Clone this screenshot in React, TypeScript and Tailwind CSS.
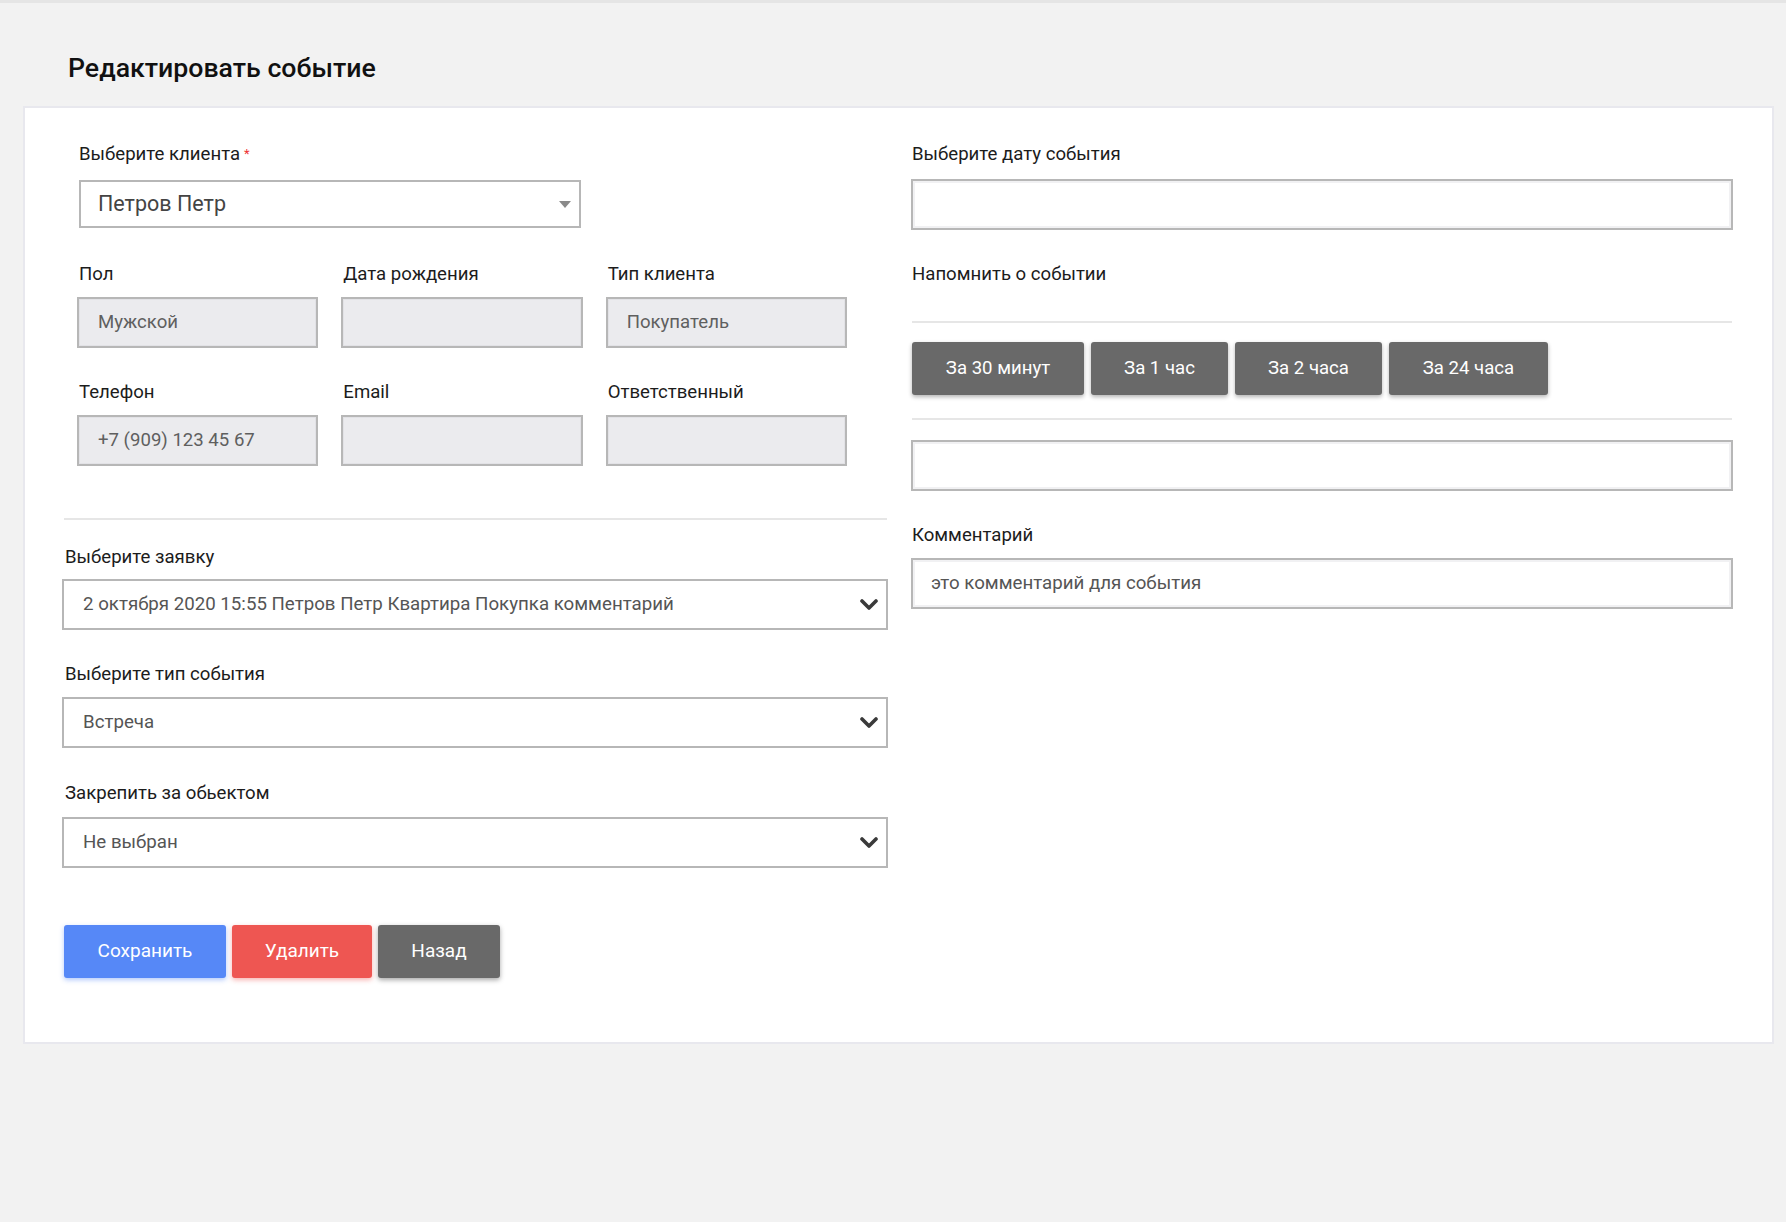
import React from "react";

const font = { fontFamily: "Roboto, 'Noto Sans', sans-serif" };

function Chevron() {
  return (
    <svg width="18" height="12" viewBox="0 0 18 12" className="shrink-0">
      <polyline points="2,2 9,9 16,2" fill="none" stroke="#3a3a3a" strokeWidth="3.6" strokeLinecap="round" strokeLinejoin="round" />
    </svg>
  );
}

function Caret() {
  return (
    <svg width="12" height="7" viewBox="0 0 12 7" className="shrink-0">
      <polygon points="0,0 12,0 6,7" fill="#8a8a8a" />
    </svg>
  );
}

function Label({ children, className = "" }: { children: React.ReactNode; className?: string }) {
  return <div className={"text-[18.6px] leading-[22px] text-[#1c1c1c] " + className}>{children}</div>;
}

function Disabled({ value }: { value?: string }) {
  return (
    <div className="h-[51px] border-2 border-[#b7b7b7] bg-[#ebebee] shadow-[inset_0_0_0_1px_#e2e2e6] flex items-center px-[19px] text-[18.6px] text-[#5f5f5f]">
      {value}
    </div>
  );
}

function Select({ value }: { value: string }) {
  return (
    <div className="-ml-[1px] h-[51px] border-2 border-[#b7b7b7] bg-white flex items-center justify-between pl-[19px] pr-[8px] text-[18.7px] text-[#555]">
      <span>{value}</span>
      <Chevron />
    </div>
  );
}

function TextInput({ value }: { value?: string }) {
  return (
    <div className="h-[51px] border-2 border-[#b7b7b7] bg-white shadow-[inset_0_0_0_2px_#f1f1f3] flex items-center px-[18px] text-[18.7px] text-[#555]">
      {value}
    </div>
  );
}

export default function App() {
  return (
    <div style={font} className="min-h-[1222px] w-full bg-[#f2f2f2] border-t-[3px] border-[#e5e5e5]">
      <h1 className="pl-[68px] pt-[49px] text-[26.7px] leading-[32px] font-medium text-[#111]">Редактировать событие</h1>
      <div className="ml-[23px] mt-[22px] w-[1751px] border-2 border-[#e8e8ee] bg-white pl-[38px] pt-[35px] pb-[64px]">
        <div className="flex gap-[23px]">
          {/* left column */}
          <div className="w-[825px] flex flex-col">
            <div className="pl-[14px] pr-[40px]">
              <Label className="pl-[2px]">
                Выберите клиента<sup className="text-[#e33] text-[13px] ml-[4px] relative -top-[2px]">*</sup>
              </Label>
              <div className="mt-[15px] ml-[2px] w-[502px] h-[48px] border-2 border-[#b7b7b7] bg-white flex items-center justify-between pl-[17px] pr-[8px] text-[21.5px] text-[#444]">
                <span>Петров Петр</span>
                <Caret />
              </div>
              <div className="grid grid-cols-3 gap-x-[23px] mt-[35px] w-[770px]">
                <div>
                  <Label className="pl-[2px]">Пол</Label>
                  <div className="mt-[12px]"><Disabled value="Мужской" /></div>
                </div>
                <div>
                  <Label className="pl-[2px]">Дата рождения</Label>
                  <div className="mt-[12px]"><Disabled /></div>
                </div>
                <div>
                  <Label className="pl-[2px]">Тип клиента</Label>
                  <div className="mt-[12px]"><Disabled value="Покупатель" /></div>
                </div>
              </div>
              <div className="grid grid-cols-3 gap-x-[23px] mt-[33px] w-[770px]">
                <div>
                  <Label className="pl-[2px]">Телефон</Label>
                  <div className="mt-[12px]"><Disabled value="+7 (909) 123 45 67" /></div>
                </div>
                <div>
                  <Label className="pl-[2px]">Email</Label>
                  <div className="mt-[12px]"><Disabled /></div>
                </div>
                <div>
                  <Label className="pl-[2px]">Ответственный</Label>
                  <div className="mt-[12px]"><Disabled /></div>
                </div>
              </div>
            </div>
            <div className="mt-[52px] h-[2px] bg-[#e6e6e6] ml-[1px] mr-[1px]" />
            <Label className="mt-[26px] pl-[2px]">Выберите заявку</Label>
            <div className="mt-[11px]"><Select value="2 октября 2020 15:55 Петров Петр Квартира Покупка комментарий" /></div>
            <Label className="mt-[33px] pl-[2px]">Выберите тип события</Label>
            <div className="mt-[12px]"><Select value="Встреча" /></div>
            <Label className="mt-[34px] pl-[2px]">Закрепить за обьектом</Label>
            <div className="mt-[13px]"><Select value="Не выбран" /></div>
            <div className="mt-[57px] flex gap-[6px] ml-[1px]">
              <button className="h-[53px] w-[162px] rounded-[3px] bg-[#5688f7] text-white text-[19px] shadow-[0_2px_5px_rgba(86,136,247,0.45)]">Сохранить</button>
              <button className="h-[53px] w-[140px] rounded-[3px] bg-[#ee5652] text-white text-[19px] shadow-[0_2px_5px_rgba(238,86,82,0.45)]">Удалить</button>
              <button className="h-[53px] w-[122px] rounded-[3px] bg-[#696969] text-white text-[19px] shadow-[0_2px_5px_rgba(0,0,0,0.35)]">Назад</button>
            </div>
          </div>
          {/* right column */}
          <div className="w-[822px] flex flex-col">
            <Label className="pl-[1px]">Выберите дату события</Label>
            <div className="mt-[14px]"><TextInput /></div>
            <Label className="mt-[33px] pl-[1px]">Напомнить о событии</Label>
            <div className="mt-[36px] h-[2px] bg-[#e6e6e6] ml-[1px] mr-[1px]" />
            <div className="mt-[19px] flex gap-[7px] ml-[1px]">
              {[
                ["За 30 минут", "w-[172px]"],
                ["За 1 час", "w-[137px]"],
                ["За 2 часа", "w-[147px]"],
                ["За 24 часа", "w-[159px]"],
              ].map(([t, w]) => (
                <button key={t} className={"h-[53px] rounded-[3px] bg-[#696969] text-white text-[18.6px] shadow-[0_2px_4px_rgba(0,0,0,0.3)] " + w}>
                  {t}
                </button>
              ))}
            </div>
            <div className="mt-[23px] h-[2px] bg-[#e6e6e6] ml-[1px] mr-[1px]" />
            <div className="mt-[20px]"><TextInput /></div>
            <Label className="mt-[33px] pl-[1px]">Комментарий</Label>
            <div className="mt-[12px]"><TextInput value="это комментарий для события" /></div>
          </div>
        </div>
      </div>
    </div>
  );
}
